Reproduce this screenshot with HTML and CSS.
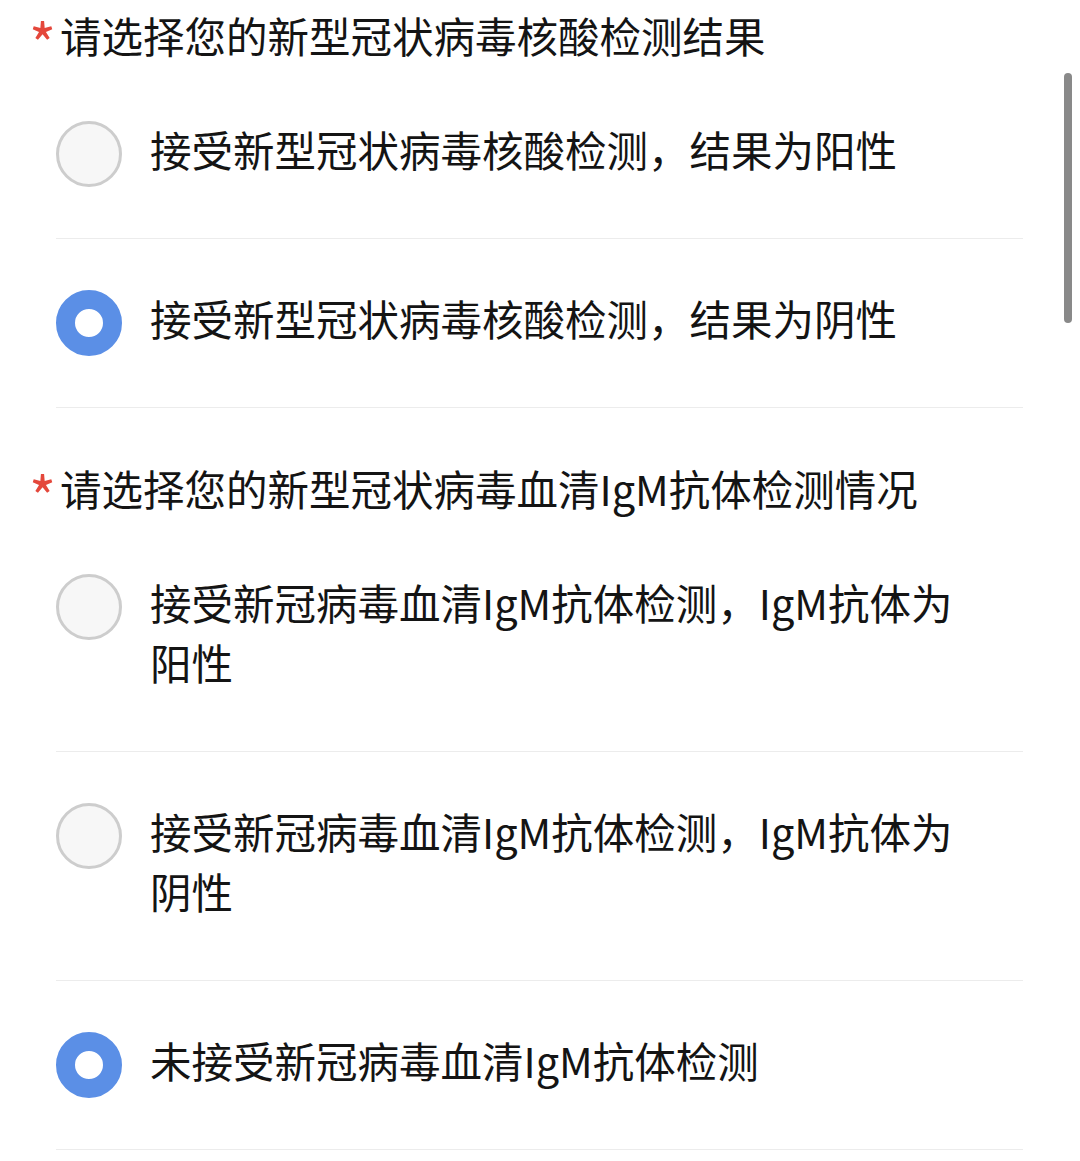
FILE: index.html
```html
<!DOCTYPE html>
<html lang="zh-CN">
<head>
  <meta charset="UTF-8">
  <meta name="viewport" content="width=device-width, initial-scale=1.0">
  <title>核酸检测问卷</title>
  <link rel="stylesheet" href="styles.css">
</head>
<body>
  <form class="survey">
    <section class="question">
      <h2 class="question-title"><span class="required">*</span>请选择您的新型冠状病毒核酸检测结果</h2>
      <div class="option-list">
        <label class="option">
          <input type="radio" name="nucleic" value="positive">
          <span class="option-text">接受新型冠状病毒核酸检测，结果为阳性</span>
        </label>
        <label class="option">
          <input type="radio" name="nucleic" value="negative" checked>
          <span class="option-text">接受新型冠状病毒核酸检测，结果为阴性</span>
        </label>
      </div>
    </section>

    <section class="question">
      <h2 class="question-title"><span class="required">*</span>请选择您的新型冠状病毒血清IgM抗体检测情况</h2>
      <div class="option-list">
        <label class="option">
          <input type="radio" name="igm" value="positive">
          <span class="option-text">接受新冠病毒血清IgM抗体检测，IgM抗体为阳性</span>
        </label>
        <label class="option">
          <input type="radio" name="igm" value="negative">
          <span class="option-text">接受新冠病毒血清IgM抗体检测，IgM抗体为阴性</span>
        </label>
        <label class="option">
          <input type="radio" name="igm" value="none" checked>
          <span class="option-text">未接受新冠病毒血清IgM抗体检测</span>
        </label>
      </div>
    </section>
  </form>

  <div class="scrollbar"></div>
</body>
</html>
```

FILE: styles.css
```css
body {
  font-family: "Noto Sans CJK SC", "Noto Sans", sans-serif;
  margin: 0;
  padding-top: 5px;
  color: #141414;
  background-color: white;
}

.question + .question {
  margin-top: 50px;
}

.question-title {
  display: flex;
  margin: 0 0 5px;
  padding-left: 31px;
  font-size: 41.5px;
  font-weight: normal;
  line-height: 60px;
}

.required {
  width: 31px;
  height: 60px;
  margin-left: -2px;
  padding-top: 14px;
  box-sizing: border-box;
  color: #e4473b;
  font-size: 58px;
  line-height: 46px;
}

.option-list {
  margin: 0 57px 0 56px;
}

.option {
  display: flex;
  align-items: flex-start;
  gap: 28px;
  padding: 49px 0 59px;
  border-bottom: 1px solid #ececec;
  font-size: 41.5px;
  line-height: 60px;
  cursor: pointer;
}

.option input {
  appearance: none;
  flex-shrink: 0;
  width: 66px;
  height: 66px;
  margin: 2px 0 -8px;
  border: 3px solid #cdcdcd;
  border-radius: 50%;
  background-color: #f7f7f7;
}

.option input:checked {
  border: 19px solid #5b8fe6;
  background-color: white;
}

.option-text {
  padding-right: 30px;
}

.scrollbar {
  position: fixed;
  top: 73px;
  right: 8px;
  width: 8px;
  height: 250px;
  border-radius: 4px;
  background-color: #898989;
}
```
